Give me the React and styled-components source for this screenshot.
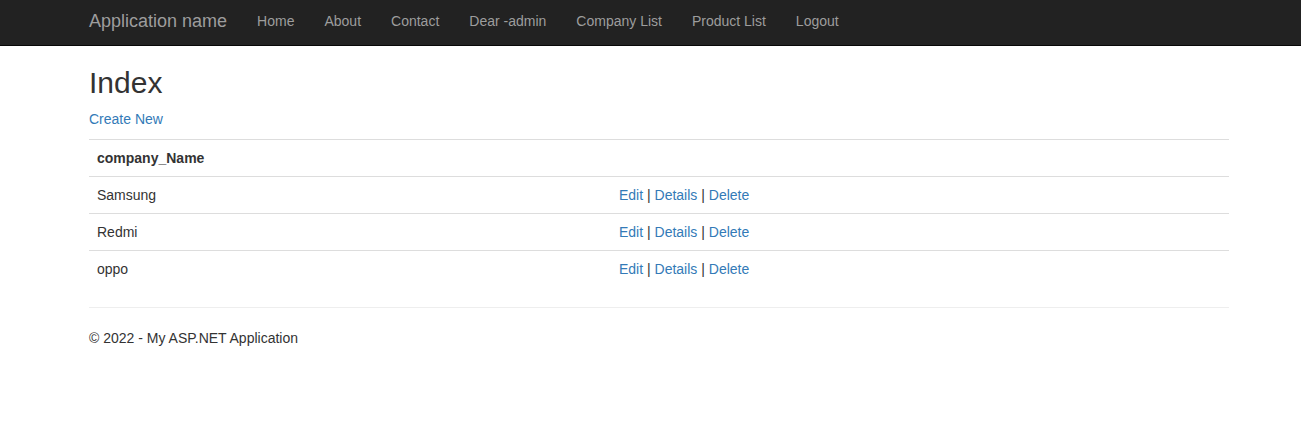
import React from "react";
import styled, { createGlobalStyle } from "styled-components";

const GlobalStyle = createGlobalStyle`
  html, body {
    margin: 0;
    padding: 0;
    background: #fff;
  }
  body {
    font-family: "Liberation Sans", Arial, Helvetica, sans-serif;
    font-size: 14px;
    line-height: 20px;
    color: #333;
  }
  * {
    box-sizing: border-box;
  }
`;

const Navbar = styled.nav`
  height: 46px;
  background: #222;
  border-bottom: 1px solid #080808;
`;

const Container = styled.div`
  width: 1170px;
  margin-left: 74px;
  padding: 0 15px;
`;

const NavInner = styled(Container)`
  display: flex;
  align-items: flex-start;
`;

const Brand = styled.a`
  display: block;
  padding: 11px 15px 14px;
  margin-left: -15px;
  font-size: 18px;
  line-height: 20px;
  color: #9d9d9d;
  text-decoration: none;
`;

const NavList = styled.ul`
  display: flex;
  list-style: none;
  margin: 0;
  padding: 0;
`;

const NavLink = styled.a`
  display: block;
  padding: 11px 15px 14px;
  font-size: 14px;
  line-height: 20px;
  color: #9d9d9d;
  text-decoration: none;
`;

const Title = styled.h2`
  font-size: 30px;
  font-weight: 500;
  line-height: 1.1;
  margin: 20px 0 10px;
`;

const Para = styled.p`
  margin: 0 0 10px;
`;

const Link = styled.a`
  color: #337ab7;
  text-decoration: none;
`;

const Table = styled.table`
  width: 100%;
  border-collapse: collapse;
  border-spacing: 0;
  margin-bottom: 20px;
`;

const Cell = styled.td`
  padding: 8px;
  line-height: 20px;
  text-align: left;
  vertical-align: top;
  border-top: 1px solid #ddd;
  width: ${(p) => (p.$first ? "522px" : "auto")};
`;

const HeadCell = styled(Cell).attrs({ as: "th" })`
  font-weight: bold;
`;

const Rule = styled.hr`
  margin: 20px 0;
  border: 0;
  border-top: 1px solid #eee;
  height: 0;
`;

const navItems = [
  "Home",
  "About",
  "Contact",
  "Dear -admin",
  "Company List",
  "Product List",
  "Logout",
];

const companies = ["Samsung", "Redmi", "oppo"];

export default function App() {
  return (
    <>
      <GlobalStyle />
      <Navbar>
        <NavInner>
          <Brand href="#">Application name</Brand>
          <NavList>
            {navItems.map((item) => (
              <li key={item}>
                <NavLink href="#">{item}</NavLink>
              </li>
            ))}
          </NavList>
        </NavInner>
      </Navbar>
      <Container>
        <Title>Index</Title>
        <Para>
          <Link href="#">Create New</Link>
        </Para>
        <Table>
          <tbody>
            <tr>
              <HeadCell $first>company_Name</HeadCell>
              <HeadCell />
            </tr>
            {companies.map((name) => (
              <tr key={name}>
                <Cell $first>{name}</Cell>
                <Cell>
                  <Link href="#">Edit</Link> |{" "}
                  <Link href="#">Details</Link> |{" "}
                  <Link href="#">Delete</Link>
                </Cell>
              </tr>
            ))}
          </tbody>
        </Table>
        <Rule />
        <footer>
          <Para>&copy; 2022 - My ASP.NET Application</Para>
        </footer>
      </Container>
    </>
  );
}
